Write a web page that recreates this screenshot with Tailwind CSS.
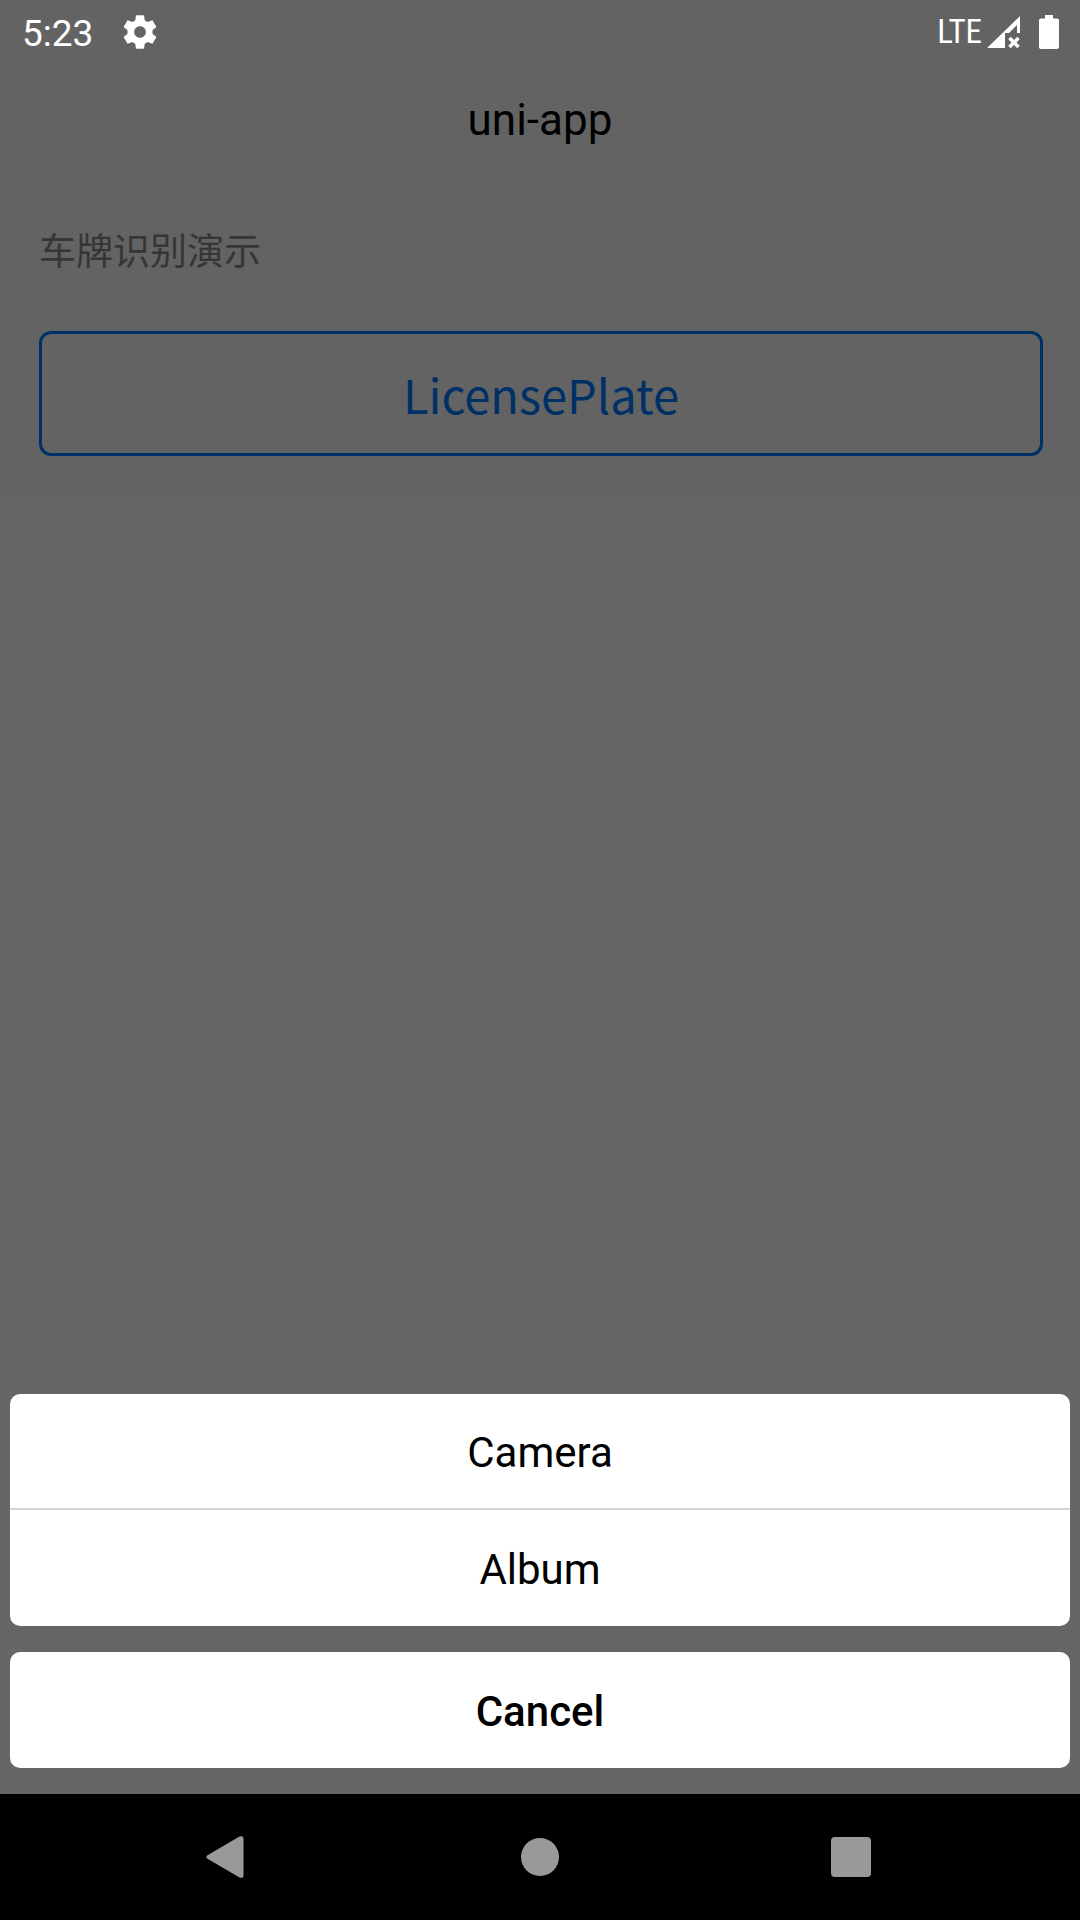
<!DOCTYPE html>
<html lang="en">
<head>
<meta charset="utf-8">
<meta name="viewport" content="width=device-width, initial-scale=1">
<title>uni-app</title>
<script src="https://cdn.jsdelivr.net/npm/@tailwindcss/browser@4"></script>
</head>
<body class="relative flex min-h-screen flex-col bg-white font-['Roboto','Noto_Sans_CJK_SC',sans-serif] text-black">
  <div class="bg-[#f7f7f7]">
    <!-- Status bar sits above the mask -->
    <div class="relative z-20 flex h-16 items-center justify-between pr-[21px] pl-[22px] text-white">
      <div class="flex items-center gap-[27px]">
        <time class="pt-0.5 text-[37px] leading-none">5:23</time>
        <svg class="h-10 w-10" viewBox="0 0 24 24" fill="currentColor" aria-label="Settings"><path d="M19.43 12.98c.04-.32.07-.64.07-.98s-.03-.66-.07-.98l2.11-1.65c.19-.15.24-.42.12-.64l-2-3.46c-.12-.22-.39-.3-.61-.22l-2.49 1c-.52-.4-1.08-.73-1.69-.98l-.38-2.65C14.46 2.18 14.25 2 14 2h-4c-.25 0-.46.18-.49.42l-.38 2.65c-.61.25-1.17.59-1.69.98l-2.49-1c-.23-.09-.49 0-.61.22l-2 3.46c-.13.22-.07.49.12.64l2.11 1.65c-.04.32-.07.65-.07.98s.03.66.07.98l-2.11 1.65c-.19.15-.24.42-.12.64l2 3.46c.12.22.39.3.61.22l2.49-1c.52.4 1.08.73 1.69.98l.38 2.65c.03.24.24.42.49.42h4c.25 0 .46-.18.49-.42l.38-2.65c.61-.25 1.17-.59 1.69-.98l2.49 1c.23.09.49 0 .61-.22l2-3.46c.12-.22.07-.49-.12-.64l-2.11-1.65zM12 15.500c-1.930 0-3.500-1.570-3.500-3.500s1.570-3.500 3.500-3.500 3.500 1.570 3.500 3.500-1.570 3.500-3.500 3.500z"/></svg>
      </div>
      <div class="flex items-center">
        <span class="mr-[5px] pb-0.5 font-['Roboto_Condensed','Liberation_Sans_Narrow','Roboto',sans-serif] text-[33px] leading-none">LTE</span>
        <svg class="mr-[19px] h-8 w-[33px]" viewBox="0 0 33 32" fill="currentColor" aria-label="No mobile data"><path d="M0 32 33 0v17h-3v-8l-8 8h-4v15z"/><path d="m22.500 22 9 9m0-9-9 9" stroke="currentColor" stroke-width="3.500"/></svg>
        <svg class="h-[34px] w-5" viewBox="0 0 20 34" fill="currentColor" aria-label="Battery full"><path d="M6 0h8v3.500h4a2 2 0 0 1 2 2V32a2 2 0 0 1-2 2H2a2 2 0 0 1-2-2V5.500a2 2 0 0 1 2-2h4z"/></svg>
      </div>
    </div>
    <header class="flex h-28 items-center justify-center">
      <h1 class="text-[44px] leading-none">uni-app</h1>
    </header>
    <main class="pt-[46px] pr-[37px] pb-10 pl-[39px]">
      <p class="font-['Noto_Sans_CJK_SC',sans-serif] text-[37px] leading-[54px] text-[#888]" lang="zh-CN">车牌识别演示</p>
      <button type="button" class="mt-[55px] block h-[125px] w-full rounded-xl border-3 border-[#007aff] font-['Noto_Sans_CJK_SC',sans-serif] text-[47px] leading-none text-[#007aff]">LicensePlate</button>
    </main>
  </div>

  <div class="absolute inset-0 z-10 bg-black/60"></div>

  <div role="dialog" aria-label="Choose image source" class="relative z-20 mt-auto flex flex-col gap-[26px] px-[10px] pb-[26px] text-[42px] leading-none">
    <div class="flex flex-col divide-y-2 divide-[#d6d6d6] overflow-hidden rounded-[10px] bg-white">
      <button type="button" class="h-[116px] pt-1">Camera</button>
      <button type="button" class="h-[116px] pt-1">Album</button>
    </div>
    <button type="button" class="h-[116px] rounded-[10px] bg-white pt-1 font-medium">Cancel</button>
  </div>

  <nav class="relative z-20 grid h-[126px] grid-cols-3 bg-black px-[70px] text-[#999]">
    <button type="button" aria-label="Back" class="flex items-center justify-center"><svg class="mr-1 h-[42px] w-[38px]" viewBox="0 0 38 42" fill="currentColor"><path d="M1.500 19.200 33.500.6Q37.500-1 37.500 3v36q0 4-4 2.400L1.500 22.800q-2.500-1.800 0-3.600z"/></svg></button>
    <button type="button" aria-label="Home" class="flex items-center justify-center"><span class="size-[38px] rounded-full bg-[#999]"></span></button>
    <button type="button" aria-label="Recent apps" class="flex items-center justify-center"><span class="mr-1 size-10 rounded bg-[#999]"></span></button>
  </nav>
</body>
</html>
